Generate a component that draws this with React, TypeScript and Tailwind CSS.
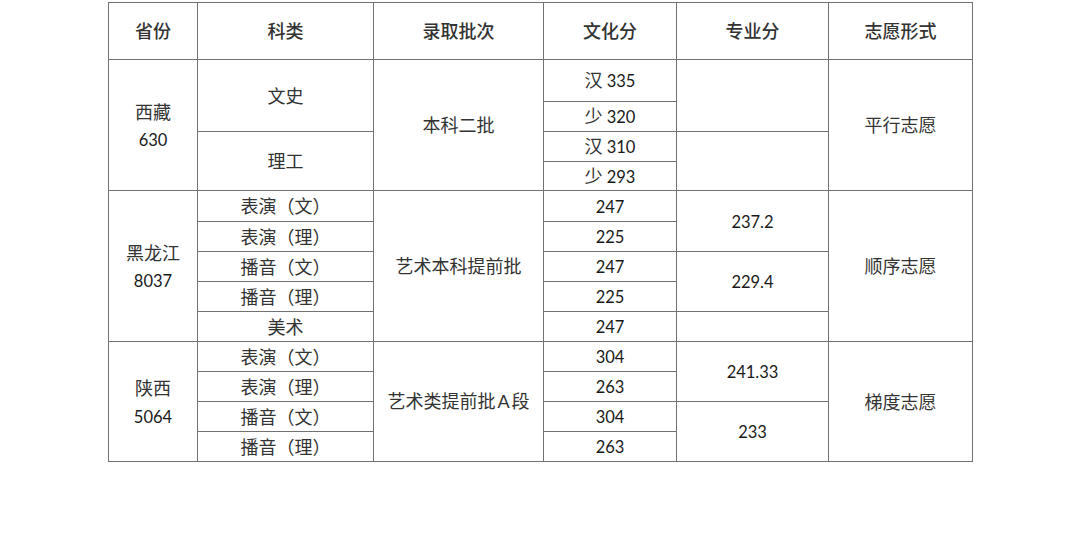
import React from "react"

const cjk = "font-['Noto_Sans_CJK_SC',sans-serif]"
const num = "font-['Lato','Noto_Sans_CJK_SC',sans-serif] text-[16.5px] text-[#1a1a1a]"

const cell = "border border-[#727272] text-center align-middle p-0 text-[18px] text-[#333] leading-[1.2]"

function Num({ children }: { children: React.ReactNode }) {
  return <span className={num}>{children}</span>
}

function Score({ ch, n }: { ch: string; n: string }) {
  return (
    <span>
      {ch} <Num>{n}</Num>
    </span>
  )
}

function Province({ name, n }: { name: string; n: string }) {
  return (
    <div className="flex flex-col items-center gap-[9px] pt-[2px]">
      <span>{name}</span>
      <Num>{n}</Num>
    </div>
  )
}

export default function App() {
  const headers = ["省份", "科类", "录取批次", "文化分", "专业分", "志愿形式"]

  return (
    <div className={`w-[1080px] h-[535px] bg-white pt-[2px] pl-[108px] ${cjk}`}>
      <table className="border-collapse table-fixed w-[864px]">
        <colgroup>
          <col className="w-[89px]" />
          <col className="w-[176px]" />
          <col className="w-[170px]" />
          <col className="w-[133px]" />
          <col className="w-[152px]" />
          <col className="w-[144px]" />
        </colgroup>
        <tbody>
          <tr className="h-[57px]">
            {headers.map((h) => (
              <td key={h} className={`${cell} font-medium text-[#1a1a1a]`}>
                {h}
              </td>
            ))}
          </tr>

          {/* 西藏 */}
          <tr className="h-[42px]">
            <td rowSpan={4} className={cell}>
              <Province name="西藏" n="630" />
            </td>
            <td rowSpan={2} className={cell}>文史</td>
            <td rowSpan={4} className={cell}>本科二批</td>
            <td className={cell}><Score ch="汉" n="335" /></td>
            <td rowSpan={2} className={cell}></td>
            <td rowSpan={4} className={cell}>平行志愿</td>
          </tr>
          <tr className="h-[30px]">
            <td className={cell}><Score ch="少" n="320" /></td>
          </tr>
          <tr className="h-[30px]">
            <td rowSpan={2} className={cell}>理工</td>
            <td className={cell}><Score ch="汉" n="310" /></td>
            <td rowSpan={2} className={cell}></td>
          </tr>
          <tr className="h-[29px]">
            <td className={cell}><Score ch="少" n="293" /></td>
          </tr>

          {/* 黑龙江 */}
          <tr className="h-[31px]">
            <td rowSpan={5} className={cell}>
              <Province name="黑龙江" n="8037" />
            </td>
            <td className={cell}>表演（文）</td>
            <td rowSpan={5} className={cell}>艺术本科提前批</td>
            <td className={cell}><Num>247</Num></td>
            <td rowSpan={2} className={cell}><Num>237.2</Num></td>
            <td rowSpan={5} className={cell}>顺序志愿</td>
          </tr>
          <tr className="h-[30px]">
            <td className={cell}>表演（理）</td>
            <td className={cell}><Num>225</Num></td>
          </tr>
          <tr className="h-[30px]">
            <td className={cell}>播音（文）</td>
            <td className={cell}><Num>247</Num></td>
            <td rowSpan={2} className={cell}><Num>229.4</Num></td>
          </tr>
          <tr className="h-[30px]">
            <td className={cell}>播音（理）</td>
            <td className={cell}><Num>225</Num></td>
          </tr>
          <tr className="h-[30px]">
            <td className={cell}>美术</td>
            <td className={cell}><Num>247</Num></td>
            <td className={cell}></td>
          </tr>

          {/* 陕西 */}
          <tr className="h-[30px]">
            <td rowSpan={4} className={cell}>
              <Province name="陕西" n="5064" />
            </td>
            <td className={cell}>表演（文）</td>
            <td rowSpan={4} className={cell}>
              艺术类提前批<span className="font-['Lato',sans-serif] px-[2px]">A</span>段
            </td>
            <td className={cell}><Num>304</Num></td>
            <td rowSpan={2} className={cell}><Num>241.33</Num></td>
            <td rowSpan={4} className={cell}>梯度志愿</td>
          </tr>
          <tr className="h-[30px]">
            <td className={cell}>表演（理）</td>
            <td className={cell}><Num>263</Num></td>
          </tr>
          <tr className="h-[30px]">
            <td className={cell}>播音（文）</td>
            <td className={cell}><Num>304</Num></td>
            <td rowSpan={2} className={cell}><Num>233</Num></td>
          </tr>
          <tr className="h-[30px]">
            <td className={cell}>播音（理）</td>
            <td className={cell}><Num>263</Num></td>
          </tr>
        </tbody>
      </table>
    </div>
  )
}
